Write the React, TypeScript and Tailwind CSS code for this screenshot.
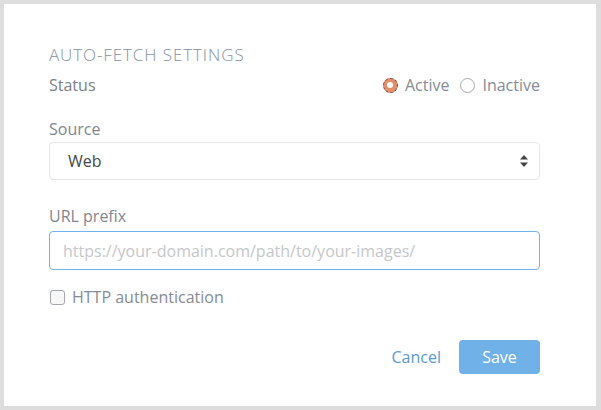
import React from 'react';

const App: React.FC = () => {
  return (
    <div className="w-[601px] h-[410px] bg-[#dddddd] pl-[4px] pt-[4px] pr-[5px] pb-[4px] font-['Open_Sans',sans-serif]">
      <div className="h-full bg-white pl-[45px] pr-[56px] pt-[39px]">
        {/* Heading */}
        <h2 className="text-[17px] font-light tracking-[0.9px] text-[#8593a6] leading-[24px]">AUTO-FETCH SETTINGS</h2>

        {/* Status row */}
        <div className="flex items-center justify-between h-[26px] mt-[5px]">
          <span className="text-[16px] text-[#7b8087]">Status</span>
          <div className="flex items-center gap-[11px] text-[16px] text-[#858c95]">
            <label className="flex items-center gap-[7px]">
              <span className="w-[15px] h-[15px] rounded-full bg-[#e38f6e] border border-dashed border-[#6e4434] flex items-center justify-center">
                <span className="w-[6px] h-[6px] rounded-full bg-white" />
              </span>
              Active
            </label>
            <label className="flex items-center gap-[7px]">
              <span className="w-[15px] h-[15px] rounded-full border border-[#a4a8ad] bg-white" />
              Inactive
            </label>
          </div>
        </div>

        {/* Source */}
        <div className="mt-[20px] text-[16px] text-[#7f868f] leading-[22px]">Source</div>
        <div className="mt-[2px] h-[38px] border border-[#e6e6e6] rounded-[4px] flex items-center justify-between pl-[18px] pr-[10px]">
          <span className="text-[16px] text-[#44474c]">Web</span>
          <svg width="10" height="14" viewBox="0 0 10 14">
            <path d="M5 1 L9 5.5 H1 Z" fill="#444" />
            <path d="M5 13 L9 8.5 H1 Z" fill="#444" />
          </svg>
        </div>

        {/* URL prefix */}
        <div className="mt-[25px] text-[16px] text-[#7f868f] leading-[22px]">URL prefix</div>
        <div className="mt-[4px] h-[39px] border border-[#72b2ee] rounded-[4px] flex items-center pl-[13px]">
          <span className="text-[16px] text-[#c5c7ca]">https://your-domain.com/path/to/your-images/</span>
        </div>

        {/* Checkbox */}
        <label className="mt-[16px] h-[22px] flex items-center gap-[7px] text-[16px] text-[#858c95]">
          <span className="w-[15px] h-[15px] rounded-[3px] border border-[#a4a8ad] bg-[#f7f7f7] ml-[1px]" />
          HTTP authentication
        </label>

        {/* Actions */}
        <div className="mt-[32px] flex items-center justify-end gap-[18px]">
          <button className="text-[16px] text-[#5b9bd5]">Cancel</button>
          <button className="w-[81px] h-[34px] rounded-[4px] bg-[#70b1e8] text-white text-[16px]">Save</button>
        </div>
      </div>
    </div>
  );
};

export default App;
